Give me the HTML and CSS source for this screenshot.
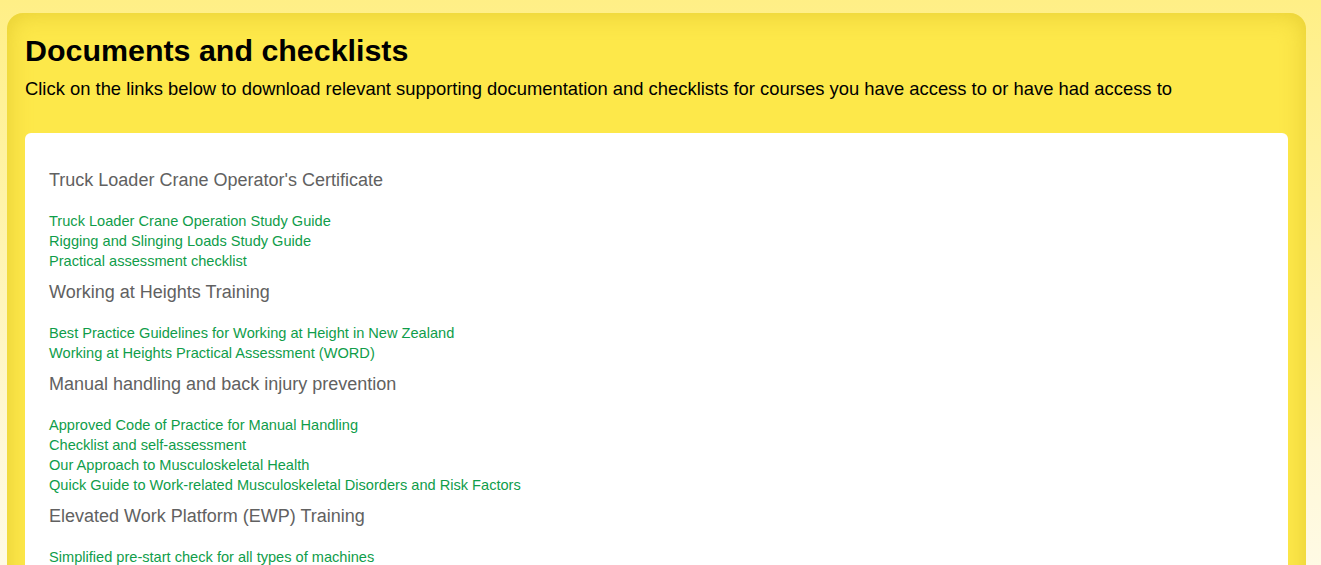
FILE: index.html
```html
<!DOCTYPE html>
<html>
<head>
<meta charset="utf-8">
<link rel="stylesheet" href="styles.css">
</head>
<body>
<div class="panel">
  <h1 class="title">Documents and checklists</h1>
  <p class="intro">Click on the links below to download relevant supporting documentation and checklists for courses you have access to or have had access to</p>
  <div class="card">
    <section class="group">
      <h3 class="group-title">Truck Loader Crane Operator's Certificate</h3>
      <a class="doc" href="#">Truck Loader Crane Operation Study Guide</a>
      <a class="doc" href="#">Rigging and Slinging Loads Study Guide</a>
      <a class="doc" href="#">Practical assessment checklist</a>
    </section>
    <section class="group">
      <h3 class="group-title">Working at Heights Training</h3>
      <a class="doc" href="#">Best Practice Guidelines for Working at Height in New Zealand</a>
      <a class="doc" href="#">Working at Heights Practical Assessment (WORD)</a>
    </section>
    <section class="group">
      <h3 class="group-title">Manual handling and back injury prevention</h3>
      <a class="doc" href="#">Approved Code of Practice for Manual Handling</a>
      <a class="doc" href="#">Checklist and self-assessment</a>
      <a class="doc" href="#">Our Approach to Musculoskeletal Health</a>
      <a class="doc" href="#">Quick Guide to Work-related Musculoskeletal Disorders and Risk Factors</a>
    </section>
    <section class="group">
      <h3 class="group-title">Elevated Work Platform (EWP) Training</h3>
      <a class="doc" href="#">Simplified pre-start check for all types of machines</a>
    </section>
  </div>
</div>
</body>
</html>
```
FILE: styles.css
```css
html, body {
  margin: 0;
  padding: 0;
}
body {
  font-family: "Liberation Sans", Arial, sans-serif;
  background: linear-gradient(to bottom, #ffef86 0px, #fff3a8 200px, #fff8d8 450px, #fffbe8 600px);
  padding: 13px 15px 0 7px;
  min-height: 100vh;
  box-sizing: border-box;
}
.panel {
  background: #fde84a;
  border-radius: 16px 16px 0 0;
  box-shadow: inset 0 0 24px rgba(200, 170, 20, 0.45);
  padding: 19px 18px 20px 18px;
}
.title {
  margin: 0;
  font-size: 30.4px;
  line-height: 36px;
  font-weight: bold;
  color: #000;
}
.intro {
  margin: 10px 0 0 0;
  font-size: 18.4px;
  line-height: 22px;
  color: #000;
}
.card {
  margin-top: 33px;
  background: #fff;
  border-radius: 6px;
  padding: 37px 24px 24px 24px;
}
.group {
  display: flex;
  flex-direction: column;
  align-items: flex-start;
  margin-bottom: 11px;
}
.group-title {
  margin: 0 0 21px 0;
  font-size: 18px;
  line-height: 20px;
  font-weight: normal;
  color: #616161;
}
.doc {
  font-size: 14.6px;
  line-height: 20px;
  color: #0f9d4a;
  text-decoration: none;
}
```
